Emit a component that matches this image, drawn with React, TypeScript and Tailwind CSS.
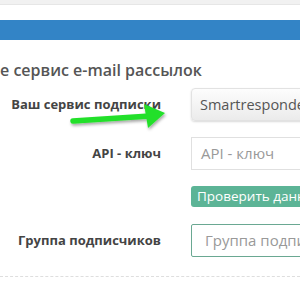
import React from "react";

const Arrow: React.FC = () => (
  <svg
    className="absolute left-[60px] top-[95px]"
    width="120"
    height="40"
    viewBox="0 0 120 40"
  >
    <defs>
      <filter id="sh" x="-20%" y="-50%" width="140%" height="200%">
        <feDropShadow dx="1" dy="2" stdDeviation="1.5" floodColor="#000" floodOpacity="0.35" />
      </filter>
    </defs>
    <g filter="url(#sh)">
      <path d="M13 26 L90 21" stroke="#22e02a" strokeWidth="5.5" strokeLinecap="round" />
      <path d="M84 9 L105 18 L88 33 Z" fill="#22e02a" />
    </g>
  </svg>
);

export default function App() {
  return (
    <div
      className="relative w-[300px] h-[293px] overflow-hidden bg-white"
      style={{ fontFamily: '"Open Sans", "Noto Sans", sans-serif' }}
    >
      <div className="h-[5px] bg-[#f1f1f1] border-b border-[#e6e6e6]" />
      <div className="h-[15px]" />
      <div className="h-[20px] bg-[#3384c6]" />

      <h2 className="mt-[20px] h-[20px] text-[16px] leading-[20px] font-semibold text-[#555] whitespace-nowrap">
        е сервис e-mail рассылок
      </h2>

      <div className="mt-[8px] grid grid-cols-[161px_1fr] gap-x-[30px]">
        <label className="h-[33px] flex items-center justify-end text-[13px] font-bold text-[#444] whitespace-nowrap">
          Ваш сервис подписки
        </label>
        <div className="h-[33px] w-[140px] flex items-center pl-[8px] rounded-[4px] border border-[#e2e2e2] bg-gradient-to-b from-[#fdfdfd] to-[#ebebeb] shadow-[0_1px_2px_rgba(0,0,0,0.15)] text-[14.5px] text-[#555] whitespace-nowrap overflow-hidden">
          Smartresponder
        </div>

        <label className="mt-[16px] h-[33px] flex items-center justify-end text-[13px] font-bold text-[#444] whitespace-nowrap">
          API - ключ
        </label>
        <div className="mt-[16px] h-[33px] w-[140px] flex items-center pl-[9px] border border-[#e0e0e0] bg-white text-[15px] text-[#999] whitespace-nowrap overflow-hidden">
          API - ключ
        </div>

        <div />
        <div className="mt-[16px] h-[21px] w-[140px] flex items-center pl-[6px] rounded-[3px] bg-[#5cb496] text-[13.5px] text-white whitespace-nowrap overflow-hidden">
          Проверить данные
        </div>

        <label className="mt-[17px] h-[33px] flex items-center justify-end text-[13px] font-bold text-[#444] whitespace-nowrap">
          Группа подписчиков
        </label>
        <div className="mt-[17px] h-[33px] w-[140px] flex items-center pl-[12px] rounded-[2px] border border-[#6aa892] bg-white text-[15px] text-[#999] whitespace-nowrap overflow-hidden">
          <span className="w-px h-[18px] bg-[#333] mr-[1px]" />
          Группа подписчиков
        </div>
      </div>

      <div className="mt-[19px] border-t border-dashed border-[#dedede]" />

      <Arrow />
    </div>
  );
}
